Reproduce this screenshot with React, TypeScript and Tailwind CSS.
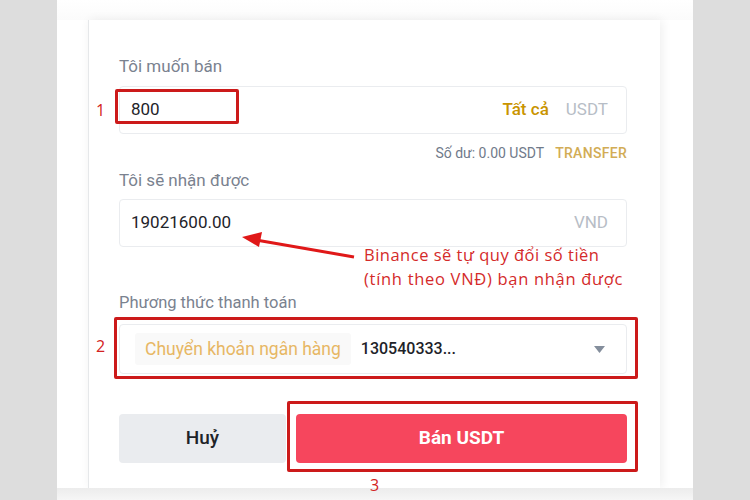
import React from "react";

const plex = { fontFamily: "Roboto, 'Noto Sans', sans-serif" };

function Field({ children, className = "" }: { children: React.ReactNode; className?: string }) {
  return (
    <div
      className={`flex items-center rounded-[4px] border border-[#eaecef] bg-white ${className}`}
    >
      {children}
    </div>
  );
}

function Marker({ n, className }: { n: string; className: string }) {
  return (
    <span
      className={`absolute text-[16px] leading-none text-[#d32222] ${className}`}
      style={{ fontFamily: "'Open Sans', 'Noto Sans', sans-serif" }}
    >
      {n}
    </span>
  );
}

export default function App() {
  return (
    <div className="relative flex h-[500px] w-[750px] overflow-hidden bg-[#dddddd]" style={plex}>
      <div className="ml-[57px] flex w-[636px] flex-col bg-white">
        <div className="h-[20px] bg-gradient-to-b from-white to-[#fbfbfb]" />
        <div className="ml-[31px] flex h-[468px] w-[572px] flex-col border-l border-[#e6e8ea] bg-white pl-[30px] pr-[33px] pt-[35px] shadow-[2px_0_10px_rgba(0,0,0,0.07)]">
          <div className="text-[17px] leading-[22px] text-[#7a828f]">Tôi muốn bán</div>
          <Field className="mt-[9px] h-[48px] px-[11px]">
            <span className="text-[17px] text-[#1e2329]">800</span>
            <span className="ml-auto text-[17px] font-medium text-[#c99400]">Tất cả</span>
            <span className="ml-[17px] mr-[7px] text-[17px] text-[#b7bdc6]">USDT</span>
          </Field>
          <div className="mt-[10px] flex justify-end text-[14px] leading-[18px]">
            <span className="text-[#707a8a]">Số dư: 0.00 USDT</span>
            <span className="ml-[11px] font-medium tracking-[0.3px] text-[#d2ac55]">TRANSFER</span>
          </div>
          <div className="mt-[7px] text-[17px] leading-[22px] text-[#7a828f]">Tôi sẽ nhận được</div>
          <Field className="mt-[8px] h-[48px] px-[11px]">
            <span className="text-[17px] text-[#1e2329]">19021600.00</span>
            <span className="ml-auto mr-[7px] text-[17px] text-[#b7bdc6]">VND</span>
          </Field>
          <div className="mt-[45px] text-[16.5px] leading-[22px] text-[#7a828f]">Phương thức thanh toán</div>
          <Field className="mt-[10px] h-[50px] px-[15px]">
            <span className="flex h-[32px] items-center rounded-[3px] bg-[#f9f9f9] px-[10px] text-[17.5px] text-[#e7b764]">
              Chuyển khoản ngân hàng
            </span>
            <span className="ml-[10px] text-[16px] font-medium text-[#1e2329]">130540333...</span>
            <svg className="ml-auto mr-[6px]" width="11" height="7" viewBox="0 0 11 7">
              <path d="M0 0h11L5.5 7z" fill="#848e9c" />
            </svg>
          </Field>
          <div className="mt-[40px] flex h-[49px] gap-[10px]">
            <button className="w-[167px] rounded-[4px] bg-[#eaecef] text-[19px] font-medium text-[#1e2329]">
              Huỷ
            </button>
            <button className="flex-1 rounded-[4px] bg-[#f6465d] text-[19px] font-bold text-white">
              Bán USDT
            </button>
          </div>
        </div>
        <div className="flex-1 bg-gradient-to-b from-[#ececec] to-[#f6f6f6]" />
      </div>

      {/* red callouts drawn over the form */}
      <div className="absolute left-[115px] top-[89px] h-[35px] w-[124px] rounded-[2px] border-[3px] border-[#cc1a1a]" />
      <div className="absolute left-[114px] top-[317px] h-[62px] w-[524px] rounded-[2px] border-[3px] border-[#cc1a1a]" />
      <div className="absolute left-[287px] top-[401px] h-[71px] w-[351px] rounded-[2px] border-[3px] border-[#cc1a1a]" />
      <Marker n="1" className="left-[96px] top-[102px]" />
      <Marker n="2" className="left-[96px] top-[338px]" />
      <Marker n="3" className="left-[370px] top-[477px]" />

      <svg className="absolute left-0 top-0" width="750" height="500" viewBox="0 0 750 500">
        <line x1="354" y1="257" x2="256" y2="240" stroke="#e01818" strokeWidth="3" />
        <path d="M242 237 L262 232 L259 247 Z" fill="#e01818" />
      </svg>
      <div
        className="absolute left-[364px] top-[243px] text-[16.5px] leading-[24px] text-[#d42a2a]"
        style={{ fontFamily: "'Open Sans', 'Noto Sans', sans-serif" }}
      >
        <div className="tracking-[0.5px]">Binance sẽ tự quy đổi số tiền</div>
        <div className="tracking-[0.7px]">(tính theo VNĐ) bạn nhận được</div>
      </div>
    </div>
  );
}
